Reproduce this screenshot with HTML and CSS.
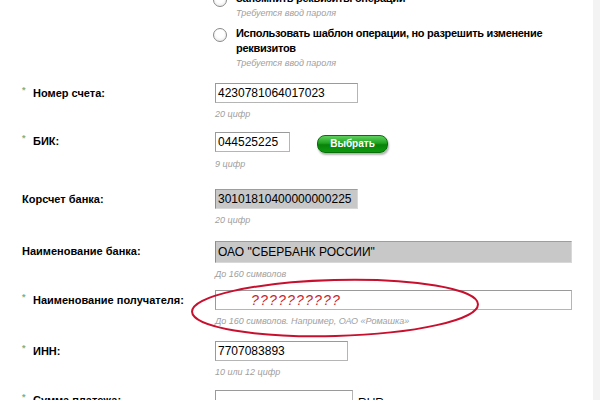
FILE: index.html
```html
<!DOCTYPE html>
<html lang="ru">
<head>
<meta charset="utf-8">
<link rel="stylesheet" href="styles.css">
</head>
<body>
<div class="page">
  <div class="options">
    <div class="option first">
      <span class="radio"></span>
      <div class="opt-body">
        <div class="opt-title">Запомнить реквизиты операции</div>
        <div class="hint">Требуется ввод пароля</div>
      </div>
    </div>
    <div class="option">
      <span class="radio"></span>
      <div class="opt-body">
        <div class="opt-title">Использовать шаблон операции, но разрешить изменение реквизитов</div>
        <div class="hint">Требуется ввод пароля</div>
      </div>
    </div>
  </div>

  <div class="form">
    <div class="row r-acc">
      <div class="label"><span class="req">*</span>Номер счета:</div>
      <div class="field">
        <div class="input w142">4230781064017023</div>
        <div class="hint">20 цифр</div>
      </div>
    </div>
    <div class="row r-bik">
      <div class="label"><span class="req">*</span>БИК:</div>
      <div class="field">
        <div class="line">
          <div class="input w74">044525225</div>
          <span class="btn">Выбрать</span>
        </div>
        <div class="hint">9 цифр</div>
      </div>
    </div>
    <div class="row r-kor">
      <div class="label">Корсчет банка:</div>
      <div class="field">
        <div class="input ro w142">30101810400000000225</div>
        <div class="hint">20 цифр</div>
      </div>
    </div>
    <div class="row r-bank">
      <div class="label">Наименование банка:</div>
      <div class="field">
        <div class="input ro wide tall">ОАО "СБЕРБАНК РОССИИ"</div>
        <div class="hint">До 160 символов</div>
      </div>
    </div>
    <div class="row r-rcp">
      <div class="label"><span class="req">*</span>Наименование получателя:</div>
      <div class="field">
        <div class="input wide"><span class="qq">??????????</span></div>
        <div class="hint">До 160 символов. Например, ОАО «Ромашка»</div>
      </div>
    </div>
    <div class="row r-inn">
      <div class="label"><span class="req">*</span>ИНН:</div>
      <div class="field">
        <div class="input w132">7707083893</div>
        <div class="hint">10 или 12 цифр</div>
      </div>
    </div>
    <div class="row r-sum">
      <div class="label"><span class="req">*</span>Сумма платежа:</div>
      <div class="field">
        <div class="line">
          <div class="input w137"></div>
          <span class="cur">RUR</span>
        </div>
      </div>
    </div>
  </div>

  <svg class="ellipse" width="300" height="70" viewBox="0 0 300 70">
    <ellipse cx="150" cy="35" rx="143" ry="28" fill="none" stroke="#c8102e" stroke-width="2" transform="rotate(-1.5 150 35)"/>
  </svg>
</div>
</body>
</html>
```

FILE: styles.css
```css
html, body {
  margin: 0;
  padding: 0;
}
body {
  background: #f3f3f3;
  font-family: "Liberation Sans", Arial, sans-serif;
  color: #000;
  overflow: hidden;
}
.page {
  position: relative;
  width: 593px;
  height: 400px;
  background: #fff;
  overflow: hidden;
}
.options {
  margin-top: -9px;
  padding-left: 213px;
}
.option {
  display: flex;
  align-items: flex-start;
  gap: 9px;
  margin-bottom: 7px;
}
.radio {
  flex: none;
  width: 12px;
  height: 12px;
  border: 1px solid #8a8a8a;
  border-radius: 50%;
  background: radial-gradient(circle at 50% 40%, #fff 40%, #e2e2e2 100%);
  margin-top: 2px;
}
.opt-title {
  font-weight: bold;
  font-size: 11px;
  line-height: 15px;
  letter-spacing: -0.3px;
  width: 335px;
}
.hint {
  font-style: italic;
  font-size: 9px;
  line-height: 12px;
  color: #a0a0a0;
  margin-top: 1px;
}
.form {
  margin-top: 14px;
}
.row {
  display: grid;
  grid-template-columns: 193px 1fr;
  padding-left: 22px;
}
.label {
  font-weight: bold;
  font-size: 11px;
  line-height: 14px;
  padding-top: 3px;
  white-space: nowrap;
}
.req {
  display: inline-block;
  width: 11px;
  color: #7fb27f;
  font-size: 9px;
  margin-left: -11px;
  vertical-align: top;
  line-height: 9px;
  text-align: left;
}
.r-acc .label, .r-bik .label, .r-rcp .label, .r-inn .label, .r-sum .label {
  padding-left: 11px;
}
.field .hint {
  margin-top: 5px;
}
.input {
  box-sizing: border-box;
  height: 20px;
  border: 1px solid #b5b5b5;
  border-top-color: #9a9a9a;
  border-left-color: #9a9a9a;
  background: #fff;
  font-size: 12px;
  line-height: 18px;
  padding-left: 2px;
  white-space: nowrap;
  overflow: hidden;
}
.input.ro {
  background: #c8c8c8;
  border-color: #9d9d9d #d8d8d8 #d8d8d8 #8c8c8c;
}
.w142 { width: 143px; }
.w74 { width: 75px; }
.w132 { width: 133px; }
.w137 { width: 138px; }
.wide { width: 357px; }
.tall { height: 22px; line-height: 20px; }
.line {
  display: flex;
  align-items: center;
}
.btn {
  margin-left: 27px;
  margin-top: 4px;
  width: 69px;
  height: 16px;
  border-radius: 8px;
  background: linear-gradient(#5fd05f 0%, #1fa31f 45%, #0a820a 55%, #0c9a0c 100%);
  border: 1px solid #0a6e0a;
  box-shadow: 1px 2px 2px rgba(0,0,0,0.3);
  color: #fff;
  font-weight: bold;
  font-size: 10px;
  line-height: 16px;
  text-align: center;
}
.cur {
  margin-left: 5px;
  font-size: 12px;
  margin-top: 6px;
}
.qq {
  margin-left: 33px;
  color: #c8232c;
  font-size: 14px;
  letter-spacing: 1.2px;
  font-style: italic;
  line-height: 18px;
}
.r-acc { margin-bottom: 11px; }
.r-bik { margin-bottom: 19px; }
.r-kor { margin-bottom: 15px; }
.r-bank { margin-bottom: 10px; }
.r-rcp { margin-bottom: 14px; }
.r-inn { margin-bottom: 12px; }
.ellipse {
  position: absolute;
  left: 185px;
  top: 273px;
}
```
